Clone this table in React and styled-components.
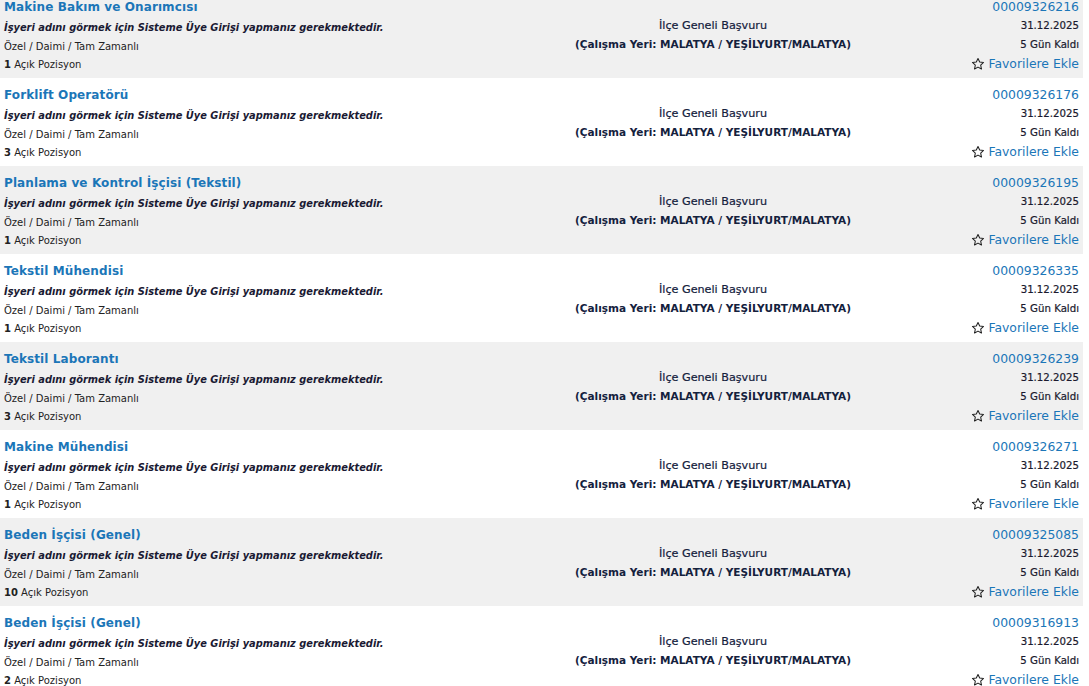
import styled, { createGlobalStyle } from "styled-components"

const jobs = [
  { title: "Makine Bakım ve Onarımcısı", count: 1, no: "00009326216" },
  { title: "Forklift Operatörü", count: 3, no: "00009326176" },
  { title: "Planlama ve Kontrol İşçisi (Tekstil)", count: 1, no: "00009326195" },
  { title: "Tekstil Mühendisi", count: 1, no: "00009326335" },
  { title: "Tekstil Laborantı", count: 3, no: "00009326239" },
  { title: "Makine Mühendisi", count: 1, no: "00009326271" },
  { title: "Beden İşçisi (Genel)", count: 10, no: "00009325085" },
  { title: "Beden İşçisi (Genel)", count: 2, no: "00009316913" },
]

const StarIcon = () => (
  <svg width="14" height="14" viewBox="0 0 24 24" fill="none" stroke="#222" strokeWidth="1.8" strokeLinejoin="round">
    <path d="M12 2.5l2.9 6.1 6.6.8-4.9 4.6 1.3 6.6L12 17.3l-5.9 3.3 1.3-6.6-4.9-4.6 6.6-.8z" />
  </svg>
)

export default function App() {
  return (
    <>
      <GlobalStyle />
      <List>
        {jobs.map((job, i) => (
          <Row key={job.no} $gray={i % 2 === 0}>
            <LeftCol>
              <Title href="#">{job.title}</Title>
              <Notice>İşyeri adını görmek için Sisteme Üye Girişi yapmanız gerekmektedir.</Notice>
              <Meta $gap={1}>Özel / Daimi / Tam Zamanlı</Meta>
              <Meta>
                <b>{job.count}</b> Açık Pozisyon
              </Meta>
            </LeftCol>
            <MiddleCol>
              <Scope>İlçe Geneli Başvuru</Scope>
              <Place>(Çalışma Yeri: MALATYA / YEŞİLYURT/MALATYA)</Place>
            </MiddleCol>
            <RightCol>
              <JobNo href="#">{job.no}</JobNo>
              <Small>31.12.2025</Small>
              <Small>5 Gün Kaldı</Small>
              <Fav href="#">
                <StarIcon />
                Favorilere Ekle
              </Fav>
            </RightCol>
          </Row>
        ))}
      </List>
    </>
  )
}

const GlobalStyle = createGlobalStyle`
  body {
    margin: 0;
    background: #fff;
    font-family: "DejaVu Sans", Verdana, sans-serif;
    overflow: hidden;
  }
`

const List = styled.div`
  width: 1083px;
  margin-top: -10px;
`

const Row = styled.div`
  display: grid;
  grid-template-columns: 556px 306px 1fr;
  height: 88px;
  padding: 0 4px;
  box-sizing: border-box;
  background: ${(p) => (p.$gray ? "#f0f0f0" : "#ffffff")};
`

const LeftCol = styled.div`
  display: flex;
  flex-direction: column;
  padding-top: 8px;
`

const Title = styled.a`
  font-size: 12px;
  font-weight: bold;
  line-height: 18px;
  color: #1b76b8;
  text-decoration: none;
  letter-spacing: 0.1px;
`

const Notice = styled.div`
  margin-top: 3px;
  font-size: 9.85px;
  font-weight: bold;
  font-style: italic;
  line-height: 18px;
  color: #1a1a33;
`

const Meta = styled.div`
  margin-top: ${(p) => p.$gap || 0}px;
  font-size: 10px;
  line-height: 18px;
  color: #222;
`

const MiddleCol = styled.div`
  display: flex;
  flex-direction: column;
  align-items: center;
  justify-content: center;
  padding-top: 2px;
`

const Scope = styled.div`
  font-size: 11.2px;
  line-height: 18px;
  color: #14213d;
  -webkit-text-stroke: 0.2px #14213d;
`

const Place = styled.div`
  font-size: 10.5px;
  font-weight: bold;
  line-height: 18px;
  color: #14213d;
`

const RightCol = styled.div`
  display: flex;
  flex-direction: column;
  align-items: flex-end;
  padding-top: 7px;
`

const JobNo = styled.a`
  font-size: 12.4px;
  line-height: 19px;
  color: #1b76b8;
  text-decoration: none;
`

const Small = styled.div`
  font-size: 10.2px;
  line-height: 19px;
  color: #1a1a2e;
  -webkit-text-stroke: 0.2px #1a1a2e;
`

const Fav = styled.a`
  display: flex;
  align-items: center;
  gap: 3px;
  font-size: 12.4px;
  line-height: 19px;
  color: #1b76b8;
  text-decoration: none;
`
